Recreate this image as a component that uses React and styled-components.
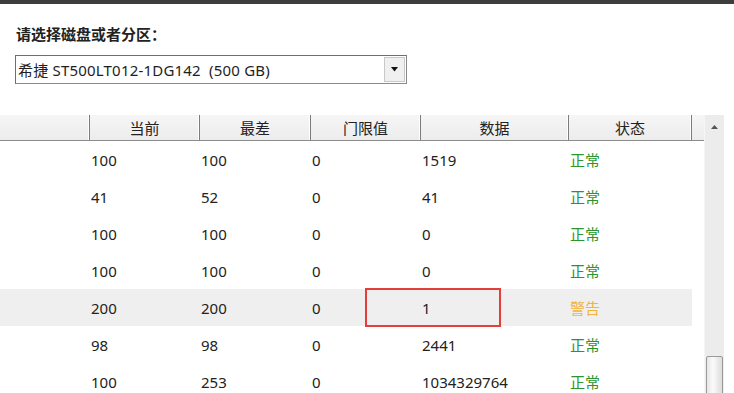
import styled, { createGlobalStyle } from 'styled-components'

const GlobalStyle = createGlobalStyle`
  html, body {
    margin: 0;
    padding: 0;
    background: #ffffff;
  }
  body {
    font-family: "Noto Sans", "Noto Sans CJK SC", sans-serif;
    font-size: 15px;
    color: #1e1e1e;
  }
`

const COLS = '90px 110px 111px 110px 148px 123px'

const Page = styled.div`
  width: 734px;
  height: 393px;
  overflow: hidden;
  display: flex;
  flex-direction: column;
`
const TopBar = styled.div`
  height: 4px;
  background: #3d3d3d;
  flex-shrink: 0;
`
const Picker = styled.div`
  display: flex;
  flex-direction: column;
  padding: 20px 0 0 16px;
`
const Label = styled.div`
  font-weight: bold;
  font-size: 15px;
  line-height: 20px;
  color: #222;
`
const Combo = styled.div`
  margin-top: 11px;
  margin-left: -1px;
  width: 392px;
  height: 29px;
  display: flex;
  align-items: center;
  border: 1px solid #8a8a8a;
  border-top-color: #6e6e6e;
  border-left-color: #6e6e6e;
  box-sizing: border-box;
  background: #fff;
  padding-left: 2px;
  font-size: 15px;
`
const ComboText = styled.span`
  flex: 1;
  white-space: pre;
  letter-spacing: 0.2px;
`
const DropButton = styled.div`
  width: 21px;
  height: 25px;
  margin-right: 1px;
  background: #f0f0f0;
  border: 1px solid #c8c8c8;
  box-sizing: border-box;
  display: flex;
  align-items: center;
  justify-content: center;
`
const TableArea = styled.div`
  margin-top: 31px;
  display: flex;
  flex: 1;
`
const List = styled.div`
  width: 704px;
  display: flex;
  flex-direction: column;
`
const HeaderRow = styled.div`
  display: grid;
  grid-template-columns: ${COLS} 1fr;
  height: 25px;
  background: linear-gradient(#f6f6f6, #ececec);
  border-bottom: 1px solid #8c8c8c;
`
const HeaderCell = styled.div`
  display: flex;
  align-items: center;
  justify-content: center;
  border-right: ${(p) => (p.$last ? 'none' : '1px solid #7c7c7c')};
  box-shadow: ${(p) => (p.$last ? 'none' : 'inset -1px 0 0 #ffffff')};
  font-size: 15px;
  color: #222;
`
const Row = styled.div`
  display: grid;
  grid-template-columns: ${COLS};
  width: 692px;
  height: 37px;
  background: ${(p) => (p.$hl ? '#efefef' : 'transparent')};
`
const Cell = styled.div`
  position: relative;
  display: flex;
  align-items: center;
  padding-left: 1px;
  font-size: 15px;
  color: ${(p) => p.$color || '#222'};
`
const Mark = styled.div`
  position: absolute;
  left: -56px;
  top: -1px;
  width: 136px;
  height: 39px;
  border: 2px solid #e53e3a;
  box-sizing: border-box;
`
const ScrollBar = styled.div`
  width: 19px;
  background: #ececec;
  border-left: 1px solid #f6f6f6;
  display: flex;
  flex-direction: column;
  align-items: center;
`
const ArrowBox = styled.div`
  height: 24px;
  display: flex;
  align-items: center;
  justify-content: center;
`
const Thumb = styled.div`
  margin-top: 217px;
  width: 17px;
  height: 60px;
  box-sizing: border-box;
  border: 1px solid #9a9a9a;
  border-radius: 2px;
  background: linear-gradient(90deg, #e6e6e6, #fafafa 40%, #dcdcdc);
`

const GREEN = '#2c962c'
const AMBER = '#f3b43c'

const rows = [
  ['100', '100', '0', '1519', '正常'],
  ['41', '52', '0', '41', '正常'],
  ['100', '100', '0', '0', '正常'],
  ['100', '100', '0', '0', '正常'],
  ['200', '200', '0', '1', '警告', true],
  ['98', '98', '0', '2441', '正常'],
  ['100', '253', '0', '1034329764', '正常'],
]

export default function App() {
  return (
    <Page>
      <GlobalStyle />
      <TopBar />
      <Picker>
        <Label>请选择磁盘或者分区：</Label>
        <Combo>
          <ComboText>希捷 ST500LT012-1DG142  (500 GB)</ComboText>
          <DropButton>
            <svg width="8" height="5" viewBox="0 0 8 5">
              <path d="M0 0h7L3.5 4.5z" fill="#111" />
            </svg>
          </DropButton>
        </Combo>
      </Picker>
      <TableArea>
        <List>
          <HeaderRow>
            <HeaderCell />
            <HeaderCell>当前</HeaderCell>
            <HeaderCell>最差</HeaderCell>
            <HeaderCell>门限值</HeaderCell>
            <HeaderCell>数据</HeaderCell>
            <HeaderCell>状态</HeaderCell>
            <HeaderCell $last />
          </HeaderRow>
          {rows.map((r, i) => (
            <Row key={i} $hl={r[5]}>
              <Cell />
              <Cell>{r[0]}</Cell>
              <Cell>{r[1]}</Cell>
              <Cell>{r[2]}</Cell>
              <Cell>
                {r[3]}
                {r[5] && <Mark />}
              </Cell>
              <Cell $color={r[5] ? AMBER : GREEN}>{r[4]}</Cell>
            </Row>
          ))}
        </List>
        <ScrollBar>
          <ArrowBox>
            <svg width="7" height="4" viewBox="0 0 7 4">
              <path d="M3.5 0L7 4H0z" fill="#555" />
            </svg>
          </ArrowBox>
          <Thumb />
        </ScrollBar>
      </TableArea>
    </Page>
  )
}
